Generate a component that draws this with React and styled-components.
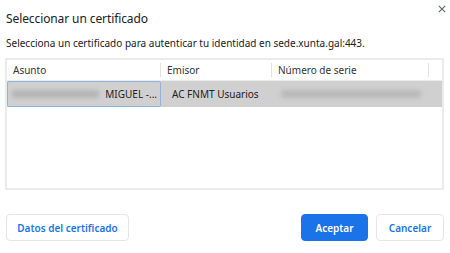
import React from "react";
import styled, { createGlobalStyle } from "styled-components";

const Global = createGlobalStyle`
  html, body {
    margin: 0;
    padding: 0;
    background: #fff;
  }
  body {
    font-family: "Segoe UI", "Noto Sans", "Open Sans", sans-serif;
    color: #202124;
  }
`;

const Dialog = styled.div`
  position: relative;
  width: 450px;
  height: 253px;
  box-sizing: border-box;
  padding: 9px 6px 0 5px;
  display: flex;
  flex-direction: column;
`;

const Close = styled.button`
  position: absolute;
  top: 2px;
  right: 1px;
  width: 14px;
  height: 14px;
  padding: 0;
  border: none;
  background: none;
  display: flex;
  align-items: center;
  justify-content: center;
`;

const Title = styled.h1`
  margin: 0 0 0 1px;
  font-size: 12px;
  font-weight: 400;
  letter-spacing: -0.1px;
  line-height: 20px;
  color: #202124;
`;

const Subtitle = styled.p`
  margin: 7px 0 0 1px;
  font-size: 10px;
  line-height: 14px;
  color: #202124;
`;

const Table = styled.div`
  margin-top: 8px;
  height: 128px;
  border: 2px solid #ebebeb;
  display: flex;
  flex-direction: column;
  font-size: 10px;
`;

const HeaderRow = styled.div`
  display: grid;
  grid-template-columns: 154px 111px 157px 1fr;
  height: 20px;
  border-bottom: 1px solid #ebebeb;
  color: #333;
`;

const HeaderCell = styled.div`
  display: flex;
  align-items: center;
  padding-left: 6px;
  margin: 3px 0;
  border-right: ${(p) => (p.$last ? "none" : "1px solid #e2e2e2")};
  box-sizing: border-box;
`;

const Row = styled.div`
  display: grid;
  grid-template-columns: 154px 111px 157px 1fr;
  height: 26px;
  background: #d0d0d0;
  color: #222;
`;

const Cell = styled.div`
  display: flex;
  align-items: center;
  padding: 0 3px 0 ${(p) => p.$pad || 4}px;
  box-sizing: border-box;
  overflow: hidden;
  white-space: nowrap;
  border: ${(p) => (p.$focus ? "1px solid #8fb4e0" : "1px solid transparent")};
  border-radius: ${(p) => (p.$focus ? "2px" : "0")};
  justify-content: ${(p) => (p.$end ? "flex-end" : "flex-start")};
  gap: 6px;
`;

const Blur = styled.span`
  display: inline-block;
  width: ${(p) => p.$w}px;
  height: 8px;
  background: ${(p) => p.$c || "#b5b5b5"};
  filter: blur(2px);
  border-radius: 2px;
`;

const Footer = styled.div`
  display: flex;
  align-items: center;
  margin-top: 24px;
  padding-left: 1px;
  gap: 8px;
`;

const Button = styled.button`
  height: 27px;
  padding: 0;
  border-radius: 4px;
  font-family: "Segoe UI", "Noto Sans", "Open Sans", sans-serif;
  font-size: 10px;
  font-weight: 600;
  white-space: nowrap;
  border: 1px solid ${(p) => (p.$primary ? "#1a73e8" : "#e6e6e6")};
  background: ${(p) => (p.$primary ? "#1a73e8" : "#fff")};
  color: ${(p) => (p.$primary ? "#fff" : "#1a73e8")};
  box-sizing: border-box;
  width: ${(p) => p.$w}px;
`;

const Spacer = styled.div`
  flex: 1;
`;

export default function App() {
  return (
    <>
      <Global />
      <Dialog>
        <Close aria-label="Cerrar">
          <svg width="8" height="8" viewBox="0 0 10 10">
            <path d="M1 1 L9 9 M9 1 L1 9" stroke="#5f6368" strokeWidth="1.4" />
          </svg>
        </Close>
        <Title>Seleccionar un certificado</Title>
        <Subtitle>
          Selecciona un certificado para autenticar tu identidad en sede.xunta.gal:443.
        </Subtitle>
        <Table>
          <HeaderRow>
            <HeaderCell>Asunto</HeaderCell>
            <HeaderCell>Emisor</HeaderCell>
            <HeaderCell>Número de serie</HeaderCell>
            <HeaderCell $last />
          </HeaderRow>
          <Row>
            <Cell $focus $end>
              <Blur $w={92} />
              MIGUEL -...
            </Cell>
            <Cell $pad={10}>AC FNMT Usuarios</Cell>
            <Cell $pad={8}>
              <Blur $w={140} $c="#b9b9b9" />
            </Cell>
            <Cell />
          </Row>
        </Table>
        <Footer>
          <Button $w={123}>Datos del certificado</Button>
          <Spacer />
          <Button $primary $w={67}>Aceptar</Button>
          <Button $w={68}>Cancelar</Button>
        </Footer>
      </Dialog>
    </>
  );
}
